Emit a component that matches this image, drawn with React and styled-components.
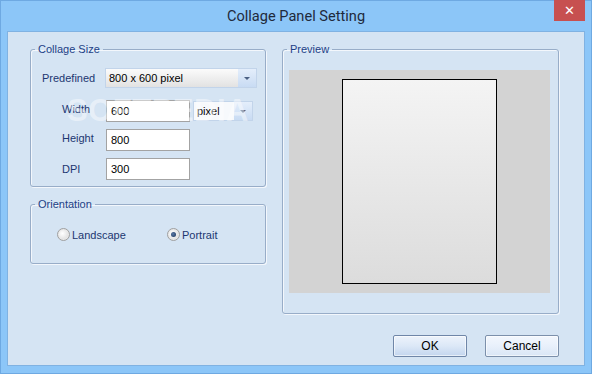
import styled, { createGlobalStyle } from 'styled-components';

const Global = createGlobalStyle`
  html, body { margin: 0; padding: 0; background: #8cc6f8; }
  body { font-family: "Liberation Sans", Arial, sans-serif; font-size: 11px; }
  * { box-sizing: border-box; }
`;

const Window = styled.div`
  position: relative;
  width: 592px;
  height: 374px;
  background: #8cc6f8;
  border: 1px solid #6ea9e2;
  padding: 0 6px 7px 6px;
  display: flex;
  flex-direction: column;
`;

const TitleBar = styled.div`
  height: 30px;
  display: grid;
  grid-template-columns: 1fr auto 1fr;
  align-items: start;
`;

const Title = styled.div`
  grid-column: 2;
  padding-top: 6px;
  font-family: Roboto, "Liberation Sans", sans-serif;
  font-size: 14.6px;
  color: #1f2a3c;
`;

const Close = styled.div`
  grid-column: 3;
  justify-self: end;
  margin-top: -1px;
  width: 31px;
  height: 21px;
  background: #c75050;
  color: #fff;
  font-family: "DejaVu Sans", sans-serif;
  font-weight: bold;
  font-size: 13px;
  display: flex;
  align-items: center;
  justify-content: center;
`;

const Client = styled.div`
  flex: 1;
  background: #d5e4f3;
  border: 1px solid #80b2e2;
  padding: 10px 25px 8px 22px;
  display: flex;
  flex-direction: column;
`;

const Main = styled.div`
  display: flex;
  gap: 16px;
`;

const Column = styled.div`
  display: flex;
  flex-direction: column;
  gap: 10px;
  width: ${p => p.$w}px;
`;

const Group = styled.fieldset`
  margin: 0;
  height: ${p => p.$h}px;
  border: 1px solid #98adc8;
  border-radius: 3px;
  box-shadow: 1px 1px 0 #f3f7fc, inset 1px 1px 0 #f3f7fc;
  padding: 0;
  min-width: 0;
`;

const Legend = styled.legend`
  margin-left: 4px;
  padding: 0 3px;
  line-height: 14px;
  font-size: 11px;
  color: #1d3f86;
`;

const GroupBody = styled.div`
  padding: ${p => p.$pad};
`;

const Row = styled.div`
  display: flex;
  align-items: flex-start;
  padding-left: ${p => p.$indent || 0}px;
  margin-bottom: ${p => p.$gap || 0}px;
`;

const Label = styled.div`
  width: ${p => p.$w}px;
  padding-top: ${p => p.$top || 3}px;
  color: #1c3670;
  font-size: 11px;
`;

const Input = styled.div`
  width: 84px;
  height: 22px;
  background: #fff;
  border: 1px solid #a3a3a3;
  padding: 4px 0 0 4px;
  font-size: 11px;
  color: #000;
`;

const Combo = styled.div`
  width: ${p => p.$w}px;
  height: 20px;
  margin: ${p => p.$m || 0};
  border: 1px solid #c2d4ea;
  background: ${p => p.$flat ? '#f7f9fc' : 'linear-gradient(#fbfbfb, #e2e2e2)'};
  display: flex;
  align-items: stretch;
`;

const ComboText = styled.div`
  flex: 1;
  padding: 3px 0 0 3px;
  font-size: 11px;
  color: #000;
`;

const ComboButton = styled.div`
  width: 18px;
  background: linear-gradient(#e4eefb, #c8dbf3);
  display: flex;
  align-items: center;
  justify-content: center;
  &::after {
    content: "";
    border-left: 3px solid transparent;
    border-right: 3px solid transparent;
    border-top: 3px solid #4b6083;
  }
`;

const RadioRow = styled.div`
  display: flex;
`;

const RadioOption = styled.div`
  width: ${p => p.$w}px;
  display: flex;
  align-items: center;
  gap: 2px;
  color: #1c3670;
  font-size: 11px;
`;

const RadioDot = styled.span`
  width: 13px;
  height: 13px;
  border-radius: 50%;
  border: 1px solid #a0a0a0;
  background: radial-gradient(circle at 40% 40%, #ffffff, #d2d2d2);
  box-shadow: inset 0 0 0 1px #e8e8e8;
  display: flex;
  align-items: center;
  justify-content: center;
  &::after {
    content: "";
    display: ${p => p.$checked ? 'block' : 'none'};
    width: 5px;
    height: 5px;
    border-radius: 50%;
    background: radial-gradient(circle at 40% 40%, #5a7aa6, #1a3158);
  }
`;

const Canvas = styled.div`
  width: 261px;
  height: 223px;
  background: #d3d3d3;
  display: flex;
  align-items: center;
  justify-content: center;
`;

const Page = styled.div`
  width: 155px;
  height: 205px;
  border: 1px solid #000;
  background: linear-gradient(#f4f4f4, #dcdcdc);
`;

const Footer = styled.div`
  margin-top: auto;
  display: flex;
  justify-content: flex-end;
  gap: 18px;
`;

const Button = styled.div`
  width: 74px;
  height: 22px;
  border: 1px solid ${p => p.$default ? '#6f86a8' : '#7c90ab'};
  border-radius: 2px;
  background: ${p => p.$default
    ? 'linear-gradient(#edf3fb 0%, #dce8f7 50%, #c3d5ee 100%)'
    : 'linear-gradient(#f3f7fd 0%, #e8f0fb 50%, #d9e6f6 100%)'};
  box-shadow: inset 0 0 0 1px rgba(255,255,255,0.6);
  display: flex;
  align-items: center;
  justify-content: center;
  font-size: 12px;
  color: #000;
`;

const Watermark = styled.div`
  position: absolute;
  left: 66px;
  top: 92px;
  font-family: "Liberation Sans", Arial, sans-serif;
  font-weight: bold;
  font-size: 31px;
  letter-spacing: 0.5px;
  color: rgba(255, 255, 255, 0.45);
  pointer-events: none;
`;

export default function App() {
  return (
    <>
      <Global />
      <Window>
        <TitleBar>
          <Title>Collage Panel Setting</Title>
          <Close>✕</Close>
        </TitleBar>
        <Client>
          <Main>
            <Column $w={236}>
              <Group $h={145}>
                <Legend>Collage Size</Legend>
                <GroupBody $pad="12px 8px 0 11px">
                  <Row $gap={12}>
                    <Label $w={63} $top={4}>Predefined</Label>
                    <Combo $w={152}>
                      <ComboText>800 x 600 pixel</ComboText>
                      <ComboButton />
                    </Combo>
                  </Row>
                  <Row $indent={20} $gap={7}>
                    <Label $w={44}>Width</Label>
                    <Input>600</Input>
                    <Combo $w={60} $m="1px 0 0 3px" $flat>
                      <ComboText>pixel</ComboText>
                      <ComboButton />
                    </Combo>
                  </Row>
                  <Row $indent={20} $gap={7}>
                    <Label $w={44}>Height</Label>
                    <Input>800</Input>
                  </Row>
                  <Row $indent={20}>
                    <Label $w={44} $top={5}>DPI</Label>
                    <Input>300</Input>
                  </Row>
                </GroupBody>
              </Group>
              <Group $h={67}>
                <Legend>Orientation</Legend>
                <GroupBody $pad="17px 8px 0 26px">
                  <RadioRow>
                    <RadioOption $w={110}>
                      <RadioDot />
                      Landscape
                    </RadioOption>
                    <RadioOption $w={80}>
                      <RadioDot $checked />
                      Portrait
                    </RadioOption>
                  </RadioRow>
                </GroupBody>
              </Group>
            </Column>
            <Column $w={277}>
              <Group $h={272}>
                <Legend>Preview</Legend>
                <GroupBody $pad="14px 7px 0 6px">
                  <Canvas>
                    <Page />
                  </Canvas>
                </GroupBody>
              </Group>
            </Column>
          </Main>
          <Footer>
            <Button $default>OK</Button>
            <Button>Cancel</Button>
          </Footer>
        </Client>
        <Watermark>SOFTPEDIA</Watermark>
      </Window>
    </>
  );
}
